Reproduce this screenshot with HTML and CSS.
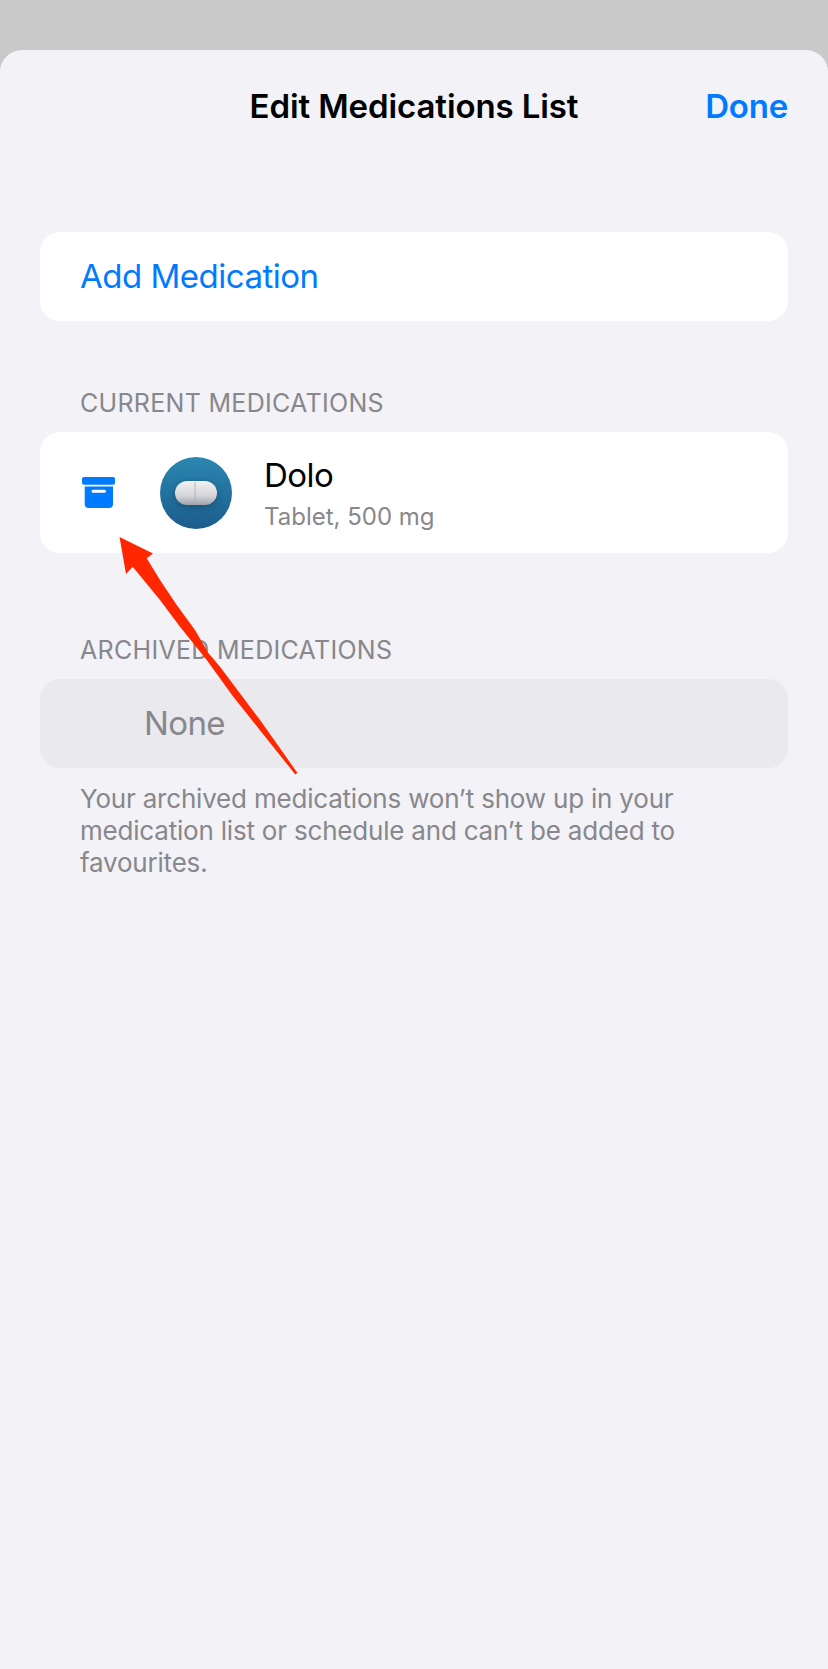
FILE: index.html
```html
<!DOCTYPE html>
<html lang="en">
<head>
    <meta charset="UTF-8">
    <meta name="viewport" content="width=device-width, initial-scale=1.0">
    <title>Edit Medications List</title>
    <link rel="stylesheet" href="styles.css">
</head>

<body>
    <div class="sheet">
        <div class="nav">
            <h1>Edit Medications List</h1>
            <a class="done">Done</a>
        </div>

        <div class="card add-card">
            <a class="add-link">Add Medication</a>
        </div>

        <h2 class="label current-label">CURRENT MEDICATIONS</h2>
        <div class="card med-card">
            <svg class="archive-icon" viewBox="0 0 33 31" width="33" height="31">
                <rect x="0" y="0" width="33" height="7.7" rx="2" fill="#007aff"/>
                <path fill="#007aff" fill-rule="evenodd" d="M2.7 9.6H31V27a4 4 0 0 1-4 4H6.7a4 4 0 0 1-4-4z M11 12.7a1.5 1.5 0 0 0 0 3h11.5a1.5 1.5 0 0 0 0-3z"/>
            </svg>
            <div class="med-icon">
                <svg class="pill" viewBox="0 0 42 24" width="42" height="24">
                    <defs>
                        <linearGradient id="pillFill" x1="0" y1="0" x2="0" y2="1">
                            <stop offset="0" stop-color="#f2f2f3"/>
                            <stop offset="0.6" stop-color="#d5d6d9"/>
                            <stop offset="1" stop-color="#a0a4aa"/>
                        </linearGradient>
                    </defs>
                    <rect width="42" height="24" rx="12" fill="url(#pillFill)"/>
                    <path d="M20 0.5v23" stroke="#a8abb0" stroke-width="0.8"/>
                </svg>
            </div>
            <div class="med-text">
                <div class="med-name">Dolo</div>
                <div class="med-detail">Tablet, 500 mg</div>
            </div>
        </div>

        <h2 class="label archived-label">ARCHIVED MEDICATIONS</h2>
        <div class="card none-card">None</div>
        <p class="note">Your archived medications won’t show up in your medication list or schedule and can’t be added to favourites.</p>
    </div>

    <!-- annotation drawn over the screenshot -->
    <svg class="arrow" viewBox="0 0 828 1669" width="828" height="1669">
        <path fill="#ff2600" d="M119.5 537 L153 553.5 L146.7 558.3 L160 580 L176.7 605 L195 630 L208.3 653 L220 666.7 L260 720 L297.3 772.7 L295.3 774.5 L233.3 696.7 L206.7 660 L180 626.7 L160 600 L132.7 566.7 L126 574 Z"/>
    </svg>
</body>
</html>
```

FILE: styles.css
```css
body {
    margin: 0;
    background: #c9c9c9;
    font-family: Inter, "Noto Sans", sans-serif;
    color: #000;
}

.sheet {
    margin-top: 50px;
    height: 1619px;
    padding: 0 40px;
    box-sizing: border-box;
    background: #f2f2f7;
    border-radius: 22px 22px 0 0;
    overflow: hidden;
}

.nav {
    display: flex;
    justify-content: center;
    align-items: center;
    height: 112px;
    position: relative;
}
.nav h1 {
    margin: 0;
    font-size: 33px;
    font-weight: 600;
    letter-spacing: -0.1px;
}
.done {
    position: absolute;
    right: 0;
    font-size: 33px;
    font-weight: 600;
    letter-spacing: -0.2px;
    color: #007aff;
}

.card {
    background: #fff;
    border-radius: 20px;
    display: flex;
    align-items: center;
    box-sizing: border-box;
}

.add-card {
    margin-top: 70px;
    height: 89px;
    padding: 0 0 2px 40px;
}
.add-link {
    font-size: 33px;
    letter-spacing: -0.5px;
    color: #007aff;
}

.label {
    margin: 0;
    padding-left: 40px;
    font-size: 25px;
    font-weight: 400;
    line-height: 30px;
    letter-spacing: 0.3px;
    color: #87878c;
}
.current-label {
    margin-top: 67px;
}
.archived-label {
    margin-top: 82px;
}

.med-card {
    margin-top: 14px;
    height: 121px;
    padding-left: 42px;
}
.archive-icon {
    flex: none;
    margin-right: 45px;
}
.med-icon {
    flex: none;
    width: 72px;
    height: 72px;
    border-radius: 50%;
    background: linear-gradient(#2a88b0, #1b5c8c);
    display: flex;
    align-items: center;
    justify-content: center;
}
.pill {
    filter: drop-shadow(0 2px 3px rgba(10, 50, 80, 0.45));
}
.med-text {
    margin-left: 32px;
}
.med-name {
    font-size: 33px;
    letter-spacing: -0.5px;
    line-height: 40px;
    margin-top: 2px;
}
.med-detail {
    font-size: 24px;
    line-height: 30px;
    margin-top: 7px;
    color: #87878c;
}

.none-card {
    margin-top: 14px;
    height: 89px;
    padding: 0 0 2px 104px;
    background: #e9e9ee;
    font-size: 33px;
    letter-spacing: -0.6px;
    color: #87878c;
}

.note {
    margin: 15px 0 0;
    padding: 0 40px;
    font-size: 26px;
    letter-spacing: -0.2px;
    line-height: 32px;
    color: #87878c;
}

.arrow {
    position: absolute;
    top: 0;
    left: 0;
}
```
